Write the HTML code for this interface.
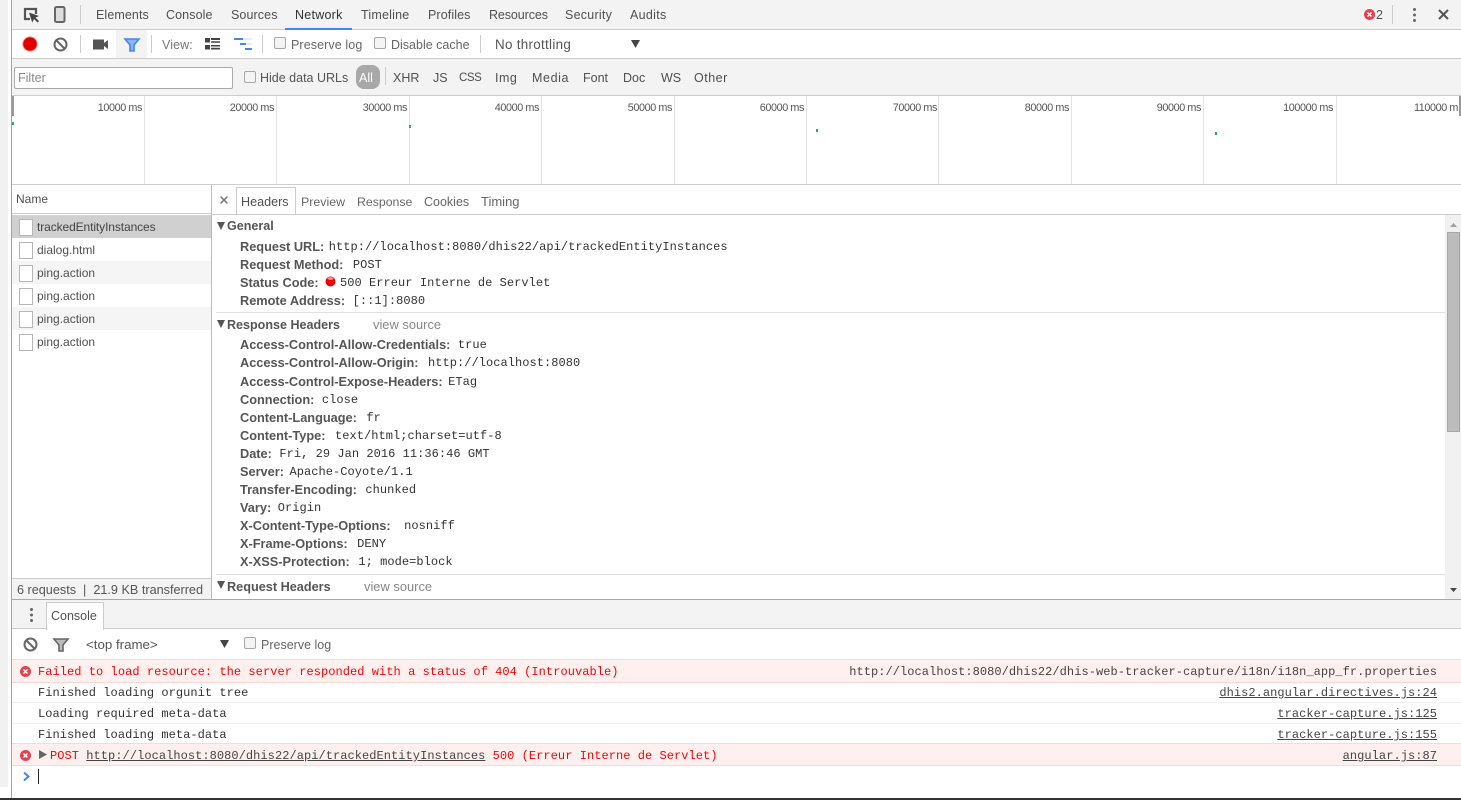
<!DOCTYPE html>
<html><head><meta charset="utf-8">
<style>
html,body{margin:0;padding:0;width:1461px;height:800px;overflow:hidden;background:#fff}
body{position:relative;font-family:"Liberation Sans",sans-serif;font-size:12.5px;color:#444}
.b{position:absolute}
.t{position:absolute;white-space:nowrap;line-height:16px;color:#505050}
.m{font-family:"Liberation Mono",monospace;font-size:12px;letter-spacing:.055px;color:#333}
.h{font-weight:bold;font-size:12.55px;color:#555}
.k{position:absolute;left:240px;white-space:nowrap;line-height:16px;font-weight:bold;font-size:12.75px;color:#555}
.k span{position:relative;top:-1px;font-family:"Liberation Mono",monospace;font-weight:normal;font-size:12px;letter-spacing:.05px;color:#333;margin-left:5.5px}
.r{color:#f00}
.cb{position:absolute;width:10px;height:10px;border:1px solid #a8a8a8;border-radius:2px;background:#f4f4f4}
.fi{position:absolute;left:19px;width:12px;height:15px;border:1px solid #b5b5b5;background:#fff}
.tl{position:absolute;top:101px;width:120px;text-align:right;font-size:10.8px;letter-spacing:-.4px;color:#555;line-height:14px;white-space:nowrap}
.g{position:absolute;top:96px;width:1px;height:88px;background:#e2e2e2}
svg{position:absolute;overflow:visible}
</style></head><body>

<!-- left strip -->
<div class="b" style="left:0;top:0;width:8px;height:787px;background:#f1f1f1"></div>
<div class="b" style="left:11px;top:0;width:1px;height:798px;background:#a3a3a3"></div>
<div class="b" style="left:0;top:798px;width:1461px;height:2px;background:#333"></div>

<!-- top tabs -->
<div class="b" style="left:12px;top:0;width:1449px;height:29px;background:#f3f3f3"></div>
<div class="b" style="left:12px;top:29px;width:1449px;height:1px;background:#ccc"></div>
<svg style="left:23px;top:7px" width="18" height="18" viewBox="0 0 18 18"><path d="M7 12H2V2h11v5" fill="none" stroke="#555" stroke-width="2.200"/><path d="M6 5.500l3.200 10 1.900-3.500 3.400 3.500 1.500-1.500-3.500-3.400L16 9z" fill="#444"/></svg>
<svg style="left:54px;top:6px" width="12" height="17" viewBox="0 0 12 17"><rect x="1" y="1" width="9.500" height="15" rx="1.500" fill="#ddd" stroke="#666" stroke-width="2"/></svg>
<div class="b" style="left:80px;top:5px;width:1px;height:19px;background:#ccc"></div>
<div class="t" style="left:96px;top:7px;letter-spacing:.1px">Elements</div>
<div class="t" style="left:166px;top:7px;letter-spacing:.1px">Console</div>
<div class="t" style="left:231px;top:7px;letter-spacing:.1px">Sources</div>
<div class="t" style="left:295px;top:7px;color:#333;letter-spacing:.25px">Network</div>
<div class="b" style="left:285px;top:28px;width:67px;height:2px;background:#4285f4"></div>
<div class="t" style="left:361px;top:7px;letter-spacing:.2px">Timeline</div>
<div class="t" style="left:428px;top:7px;letter-spacing:.1px">Profiles</div>
<div class="t" style="left:489px;top:7px;letter-spacing:-.1px">Resources</div>
<div class="t" style="left:565px;top:7px;letter-spacing:.25px">Security</div>
<div class="t" style="left:630px;top:7px;letter-spacing:.3px">Audits</div>
<svg style="left:1364px;top:9px" width="11" height="11" viewBox="0 0 11 11"><circle cx="5.500" cy="5.500" r="5.500" fill="#e9404f"/><path d="M3.500 3.500l4 4m0-4l-4 4" stroke="#fff" stroke-width="1.500"/></svg>
<div class="t" style="left:1376px;top:7px">2</div>
<div class="b" style="left:1392px;top:5px;width:1px;height:19px;background:#ccc"></div>
<div class="b" style="left:1412.500px;top:8px;width:3px;height:3px;border-radius:2px;background:#666;box-shadow:0 5.500px 0 #666,0 11px 0 #666"></div>
<svg style="left:1438px;top:9px" width="11" height="11" viewBox="0 0 11 11"><path d="M1 1l9 9m0-9l-9 9" stroke="#555" stroke-width="2"/></svg>

<!-- toolbar 2 -->
<svg style="left:22px;top:36px" width="16" height="16" viewBox="0 0 16 16"><circle cx="8" cy="8" r="7.800" fill="#e8000055"/><circle cx="8" cy="8" r="6.800" fill="#e00000"/></svg>
<svg style="left:53px;top:37px" width="15" height="15" viewBox="0 0 15 15"><circle cx="7.500" cy="7.500" r="6" fill="none" stroke="#666" stroke-width="2"/><path d="M3.500 3.500l8 8" stroke="#666" stroke-width="2"/></svg>
<div class="b" style="left:80px;top:35px;width:1px;height:18px;background:#ccc"></div>
<svg style="left:93px;top:39px" width="16" height="11" viewBox="0 0 16 11"><rect x="0" y="0.500" width="11" height="10" fill="#555"/><path d="M11 4l4-3v9l-4-3z" fill="#555"/></svg>
<div class="b" style="left:116px;top:30px;width:31px;height:28px;background:#f3f3f3"></div>
<svg style="left:124px;top:38px" width="16" height="14" viewBox="0 0 16 14"><path d="M1 1h14l-5 6v6H6V7z" fill="#8db4f0" stroke="#4285f4" stroke-width="1.600"/></svg>
<div class="b" style="left:151px;top:35px;width:1px;height:18px;background:#ccc"></div>
<div class="t" style="left:162px;top:37px;color:#777;letter-spacing:.1px">View:</div>
<svg style="left:205px;top:38px" width="15" height="12" viewBox="0 0 15 12"><path d="M0 0h5v4.500H0zM0 7h5v4.500H0zM6 0h9v2H6zM6 3.200h9v1.500H6zM6 7h9v1.500H6zM6 9.800h9v1.700H6z" fill="#444"/></svg>
<svg style="left:233px;top:38px" width="19" height="13" viewBox="0 0 19 13"><path d="M1 0h9v2H1zM7 5h6v2H7zM12 10h7v2h-7z" fill="#4285f4"/><path d="M10 0h9v2h-9zM13 5h6v2h-6z" fill="#e3ecfa"/></svg>
<div class="b" style="left:262px;top:35px;width:1px;height:18px;background:#ccc"></div>
<div class="cb" style="left:274px;top:37px"></div>
<div class="t" style="left:291px;top:37px;color:#666;letter-spacing:.1px">Preserve log</div>
<div class="cb" style="left:374px;top:37px"></div>
<div class="t" style="left:391px;top:37px;color:#666">Disable cache</div>
<div class="b" style="left:480px;top:35px;width:1px;height:18px;background:#ccc"></div>
<div class="t" style="left:495px;top:37px;color:#555;font-size:13.400px;letter-spacing:.3px">No throttling</div>
<svg style="left:631px;top:40px" width="9" height="8" viewBox="0 0 9 8"><path d="M0 0h9L4.500 8z" fill="#444"/></svg>

<!-- filter bar -->
<div class="b" style="left:12px;top:58px;width:1449px;height:1px;background:#ccc"></div>
<div class="b" style="left:12px;top:59px;width:1449px;height:36px;background:#f3f3f3"></div>
<div class="b" style="left:14px;top:67px;width:217px;height:20px;border:1px solid #aaa;border-radius:2px;background:#fff"></div>
<div class="t" style="left:18px;top:70px;color:#8a8a8a">Filter</div>
<div class="cb" style="left:244px;top:71px"></div>
<div class="t" style="left:260px;top:70px;color:#555">Hide data URLs</div>
<div class="b" style="left:356px;top:65px;width:24px;height:24px;border-radius:8px;background:#a8a8a8"></div>
<div class="t" style="left:359px;top:70px;color:#fff">All</div>
<div class="b" style="left:385px;top:67px;width:1px;height:18px;background:#ccc"></div>
<div class="t" style="left:393px;top:70px">XHR</div>
<div class="t" style="left:433px;top:70px">JS</div>
<div class="t" style="left:459px;top:70px;font-size:11.500px;letter-spacing:-.4px">CSS</div>
<div class="t" style="left:495px;top:70px;letter-spacing:.5px">Img</div>
<div class="t" style="left:532px;top:70px;letter-spacing:.6px">Media</div>
<div class="t" style="left:583px;top:70px">Font</div>
<div class="t" style="left:623px;top:70px">Doc</div>
<div class="t" style="left:661px;top:70px">WS</div>
<div class="t" style="left:694px;top:70px;letter-spacing:.5px">Other</div>

<!-- timeline -->
<div class="b" style="left:12px;top:95px;width:1449px;height:1px;background:#ccc"></div>
<div class="g" style="left:144px"></div><div class="g" style="left:276px"></div><div class="g" style="left:409px"></div><div class="g" style="left:541px"></div><div class="g" style="left:674px"></div><div class="g" style="left:806px"></div><div class="g" style="left:938px"></div><div class="g" style="left:1071px"></div><div class="g" style="left:1203px"></div><div class="g" style="left:1336px"></div>
<div class="tl" style="left:22px">10000 ms</div>
<div class="tl" style="left:154px">20000 ms</div>
<div class="tl" style="left:287px">30000 ms</div>
<div class="tl" style="left:419px">40000 ms</div>
<div class="tl" style="left:552px">50000 ms</div>
<div class="tl" style="left:684px">60000 ms</div>
<div class="tl" style="left:817px">70000 ms</div>
<div class="tl" style="left:949px">80000 ms</div>
<div class="tl" style="left:1081px">90000 ms</div>
<div class="tl" style="left:1213px">100000 ms</div>
<div class="b" style="left:1341px;top:101px;width:117px;height:14px;overflow:hidden;text-align:right;font-size:10.800px;letter-spacing:-.4px;line-height:14px;color:#555;white-space:nowrap">110000 m</div>
<div class="b" style="left:1459px;top:96px;width:2px;height:20px;background:#999"></div>
<div class="b" style="left:12px;top:96px;width:2px;height:20px;background:#999"></div>
<div class="b" style="left:12px;top:122px;width:2px;height:3px;background:#2aa198"></div>
<div class="b" style="left:409px;top:125px;width:2px;height:3px;background:#2aa198"></div>
<div class="b" style="left:816px;top:129px;width:2px;height:3px;background:#2aa198"></div>
<div class="b" style="left:1215px;top:132px;width:2px;height:3px;background:#2aa198"></div>
<div class="b" style="left:12px;top:184px;width:1449px;height:1px;background:#ccc"></div>

<!-- sidebar -->
<div class="b" style="left:211px;top:185px;width:1px;height:414px;background:#bbb"></div>
<div class="t" style="left:16px;top:191px;font-size:12px">Name</div>
<div class="b" style="left:12px;top:213px;width:199px;height:1px;background:#ccc"></div>
<div class="b" style="left:12px;top:215px;width:199px;height:23px;background:#d0d0d0"></div>
<div class="b" style="left:12px;top:261px;width:199px;height:23px;background:#f5f5f5"></div>
<div class="b" style="left:12px;top:307px;width:199px;height:23px;background:#f5f5f5"></div>
<div class="fi" style="top:219px"></div><div class="fi" style="top:242px"></div><div class="fi" style="top:265px"></div><div class="fi" style="top:288px"></div><div class="fi" style="top:311px"></div><div class="fi" style="top:334px"></div>
<div class="t" style="left:37px;top:219px;font-size:12px;letter-spacing:-.1px;color:#444">trackedEntityInstances</div>
<div class="t" style="left:37px;top:242px;font-size:12px">dialog.html</div>
<div class="t" style="left:37px;top:265px;font-size:12px">ping.action</div>
<div class="t" style="left:37px;top:288px;font-size:12px">ping.action</div>
<div class="t" style="left:37px;top:311px;font-size:12px">ping.action</div>
<div class="t" style="left:37px;top:334px;font-size:12px">ping.action</div>
<div class="b" style="left:12px;top:578px;width:199px;height:1px;background:#ccc"></div>
<div class="b" style="left:12px;top:579px;width:199px;height:20px;background:#f3f3f3"></div>
<div class="t" style="left:17px;top:582px;font-size:12.650px;color:#555">6 requests &nbsp;|&nbsp; 21.9 KB transferred</div>

<!-- details tabs -->
<svg style="left:220px;top:196px" width="8" height="8" viewBox="0 0 8 8"><path d="M.5.500l7 7m0-7l-7 7" stroke="#777" stroke-width="1.500"/></svg>
<div class="b" style="left:236px;top:187px;width:58px;height:27px;border:1px solid #ccc;border-bottom:0;background:#fff"></div>
<div class="t" style="left:241px;top:194px;font-size:12.600px">Headers</div>
<div class="t" style="left:301px;top:194px;font-size:12.400px;color:#666">Preview</div>
<div class="t" style="left:357px;top:194px;font-size:12.300px;color:#666">Response</div>
<div class="t" style="left:424px;top:194px;font-size:12.500px;color:#666">Cookies</div>
<div class="t" style="left:481px;top:194px;font-size:13px;color:#666">Timing</div>
<div class="b" style="left:212px;top:214px;width:1249px;height:1px;background:#ccc"></div>

<!-- details -->
<svg style="left:217px;top:222px" width="8" height="8" viewBox="0 0 8 8"><path d="M0 0h8L4 8z" fill="#555"/></svg>
<div class="t h" style="left:227px;top:218px">General</div>
<div class="k" style="top:239px">Request URL:<span style="margin-left:4.500px">http://localhost:8080/dhis22/api/trackedEntityInstances</span></div>
<div class="k" style="top:257px">Request Method:<span style="margin-left:9.500px">POST</span></div>
<div class="k" style="top:275px">Status Code:</div>
<svg style="left:325px;top:276px" width="11" height="11" viewBox="0 0 11 11"><circle cx="5.500" cy="5.500" r="5" fill="#e00"/><ellipse cx="5.500" cy="2.500" rx="3" ry="1.500" fill="#f88"/></svg>
<div class="t m" style="left:340px;top:275px">500 Erreur Interne de Servlet</div>
<div class="k" style="top:293px">Remote Address:<span style="margin-left:7.500px">[::1]:8080</span></div>
<div class="b" style="left:216px;top:312px;width:1229px;height:1px;background:#e0e0e0"></div>
<svg style="left:217px;top:320px" width="8" height="8" viewBox="0 0 8 8"><path d="M0 0h8L4 8z" fill="#555"/></svg>
<div class="t h" style="left:227px;top:317px">Response Headers</div>
<div class="t" style="left:373px;top:317px;color:#888;font-size:12.900px">view source</div>
<div class="k" style="top:337px">Access-Control-Allow-Credentials:<span style="margin-left:7.500px">true</span></div>
<div class="k" style="top:355px">Access-Control-Allow-Origin:<span style="margin-left:9.500px">http://localhost:8080</span></div>
<div class="k" style="top:374px">Access-Control-Expose-Headers:<span>ETag</span></div>
<div class="k" style="top:392px">Connection:<span style="margin-left:7.500px">close</span></div>
<div class="k" style="top:410px">Content-Language:<span style="margin-left:9.500px">fr</span></div>
<div class="k" style="top:428px">Content-Type:<span style="margin-left:9.500px">text/html;charset=utf-8</span></div>
<div class="k" style="top:446px">Date:<span style="margin-left:7.500px">Fri, 29 Jan 2016 11:36:46 GMT</span></div>
<div class="k" style="top:464px">Server:<span>Apache-Coyote/1.1</span></div>
<div class="k" style="top:482px">Transfer-Encoding:<span style="margin-left:8.500px">chunked</span></div>
<div class="k" style="top:500px">Vary:<span style="margin-left:6.500px">Origin</span></div>
<div class="k" style="top:518px">X-Content-Type-Options:<span style="margin-left:13.500px">nosniff</span></div>
<div class="k" style="top:536px">X-Frame-Options:<span style="margin-left:9.500px">DENY</span></div>
<div class="k" style="top:554px">X-XSS-Protection:<span style="margin-left:8.500px">1; mode=block</span></div>
<div class="b" style="left:216px;top:574px;width:1229px;height:1px;background:#e0e0e0"></div>
<svg style="left:217px;top:581px" width="8" height="8" viewBox="0 0 8 8"><path d="M0 0h8L4 8z" fill="#555"/></svg>
<div class="t h" style="left:227px;top:579px;font-size:12.700px">Request Headers</div>
<div class="t" style="left:364px;top:579px;color:#888;font-size:12.900px">view source</div>

<!-- scrollbar -->
<div class="b" style="left:1445px;top:215px;width:16px;height:384px;background:#f1f1f1"></div>
<div class="b" style="left:1447px;top:232px;width:13px;height:200px;background:#bcbcbc;box-shadow:inset 0 0 0 1px #a8a8a8"></div>
<svg style="left:1450px;top:223px" width="7" height="4" viewBox="0 0 7 4"><path d="M0 4L3.500 0 7 4z" fill="#a0a0a0"/></svg>
<svg style="left:1450px;top:588px" width="7" height="4" viewBox="0 0 7 4"><path d="M0 0L3.500 4 7 0z" fill="#444"/></svg>

<!-- console tabs -->
<div class="b" style="left:12px;top:599px;width:1449px;height:1px;background:#a8a8a8"></div>
<div class="b" style="left:12px;top:600px;width:1449px;height:28px;background:#f3f3f3"></div>
<div class="b" style="left:12px;top:628px;width:1449px;height:1px;background:#ccc"></div>
<div class="b" style="left:29.500px;top:608px;width:3px;height:3px;border-radius:2px;background:#666;box-shadow:0 5.500px 0 #666,0 11px 0 #666"></div>
<div class="b" style="left:46px;top:602px;width:56px;height:27px;border:1px solid #ccc;border-bottom:0;background:#fff"></div>
<div class="t" style="left:51px;top:608px;font-size:12.500px">Console</div>

<!-- console toolbar -->
<svg style="left:23px;top:637px" width="15" height="15" viewBox="0 0 15 15"><circle cx="7.500" cy="7.500" r="6" fill="none" stroke="#666" stroke-width="2"/><path d="M3.500 3.500l8 8" stroke="#666" stroke-width="2"/></svg>
<svg style="left:53px;top:638px" width="16" height="14" viewBox="0 0 16 14"><path d="M1 1h14l-5 6v6H6V7z" fill="#bbb" stroke="#666" stroke-width="1.600"/></svg>
<div class="t" style="left:86px;top:637px;color:#555;font-size:13.300px">&lt;top frame&gt;</div>
<svg style="left:220px;top:640px" width="9" height="8" viewBox="0 0 9 8"><path d="M0 0h9L4.500 8z" fill="#444"/></svg>
<div class="cb" style="left:244px;top:637px"></div>
<div class="t" style="left:261px;top:637px;color:#666">Preserve log</div>

<!-- console rows -->
<div class="b" style="left:12px;top:659px;width:1449px;height:22px;background:#fff0f0;border-top:1px solid #ffd6d6;border-bottom:1px solid #ffd6d6"></div>
<div class="b" style="left:12px;top:702px;width:1449px;height:1px;background:#f0f0f0"></div>
<div class="b" style="left:12px;top:723px;width:1449px;height:1px;background:#f0f0f0"></div>
<div class="b" style="left:12px;top:743px;width:1449px;height:21px;background:#fff0f0;border-top:1px solid #ffd6d6;border-bottom:1px solid #ffd6d6"></div>
<svg style="left:20px;top:666px" width="11" height="11" viewBox="0 0 11 11"><circle cx="5.500" cy="5.500" r="5.500" fill="#e9404f"/><path d="M3.500 3.500l4 4m0-4l-4 4" stroke="#fff" stroke-width="1.500"/></svg>
<div class="t m r" style="left:38px;top:664px">Failed to load resource: the server responded with a status of 404 (Introuvable)</div>
<div class="t m" style="right:24px;top:664px;color:#444">http://localhost:8080/dhis22/dhis-web-tracker-capture/i18n/i18n_app_fr.properties</div>
<div class="t m" style="left:38px;top:685px">Finished loading orgunit tree</div>
<div class="t m" style="right:24px;top:685px;color:#444;text-decoration:underline">dhis2.angular.directives.js:24</div>
<div class="t m" style="left:38px;top:706px">Loading required meta-data</div>
<div class="t m" style="right:24px;top:706px;color:#444;text-decoration:underline">tracker-capture.js:125</div>
<div class="t m" style="left:38px;top:727px">Finished loading meta-data</div>
<div class="t m" style="right:24px;top:727px;color:#444;text-decoration:underline">tracker-capture.js:155</div>
<svg style="left:20px;top:750px" width="11" height="11" viewBox="0 0 11 11"><circle cx="5.500" cy="5.500" r="5.500" fill="#e9404f"/><path d="M3.500 3.500l4 4m0-4l-4 4" stroke="#fff" stroke-width="1.500"/></svg>
<svg style="left:39px;top:750px" width="8" height="9" viewBox="0 0 8 9"><path d="M0 0l8 4.500L0 9z" fill="#666"/></svg>
<div class="t m r" style="left:50px;top:748px">POST <span style="color:#444;text-decoration:underline">http://localhost:8080/dhis22/api/trackedEntityInstances</span> 500 (Erreur Interne de Servlet)</div>
<div class="t m" style="right:24px;top:748px;color:#444;text-decoration:underline">angular.js:87</div>
<svg style="left:23px;top:772px" width="7" height="9" viewBox="0 0 7 9"><path d="M1 .500L5.500 4.500 1 8.500" fill="none" stroke="#4285f4" stroke-width="2"/></svg>
<div class="b" style="left:38px;top:769px;width:1px;height:15px;background:#222"></div>
</body></html>
